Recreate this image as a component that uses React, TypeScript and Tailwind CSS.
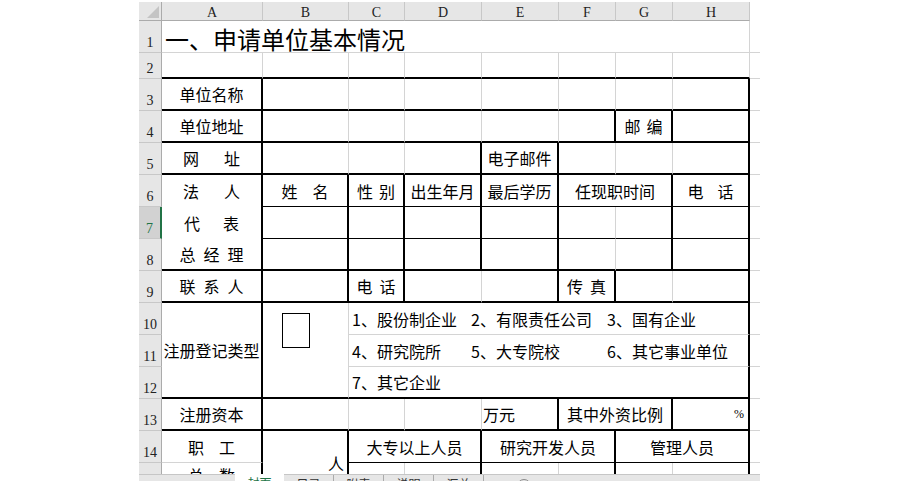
import type { ReactNode } from "react";
import clsx from "clsx";

type Edge = "g" | "T" | "t" | "n";

// gridline (g), thick black (T), thin black (t), none (n)
const RIGHT: Record<Edge, string> = {
  g: "border-r border-r-[#d4d4d4]",
  T: "border-r-2 border-r-black",
  t: "border-r border-r-black",
  n: "",
};

const BOTTOM: Record<Edge, string> = {
  g: "border-b border-b-[#d4d4d4]",
  T: "border-b-2 border-b-black",
  t: "border-b border-b-black",
  n: "",
};

const SPAN: Record<number, string> = {
  1: "col-span-1",
  2: "col-span-2",
  6: "col-span-6",
  8: "col-span-8",
};

const ROWS: Record<number, string> = {
  1: "row-span-1",
  2: "row-span-2",
  3: "row-span-3",
};

function Cell({
  span = 1,
  rows = 1,
  r = "g",
  b = "g",
  className,
  children,
}: {
  span?: number;
  rows?: number;
  r?: Edge;
  b?: Edge;
  className?: string;
  children?: ReactNode;
}) {
  return (
    <div
      className={clsx(
        "flex min-w-0 items-center justify-center overflow-hidden whitespace-nowrap",
        SPAN[span],
        ROWS[rows],
        RIGHT[r],
        BOTTOM[b],
        className,
      )}
    >
      {children}
    </div>
  );
}

// spaced-out label, chars pushed to both ends of a fixed width
function Spread({ text, className }: { text: string; className: string }) {
  return (
    <span className={clsx("flex justify-between", className)}>
      {[...text].map((ch, i) => (
        <span key={i}>{ch}</span>
      ))}
    </span>
  );
}

function RowHead({ n, active }: { n: number; active?: boolean }) {
  return (
    <div
      className={clsx(
        "flex items-end justify-center border-b border-b-[#c8c8c8] pb-[2px] font-['Liberation_Serif',serif] text-[14px] leading-[14px]",
        active
          ? "border-r-2 border-r-[#217346] bg-[#d2d2d2] text-[#217346]"
          : "border-r border-r-[#ababab] bg-[#e6e6e6] text-[#222]",
      )}
    >
      {n}
    </div>
  );
}

function ColHead({ label }: { label: string }) {
  return (
    <div className="flex items-center justify-center border-r border-b border-r-[#c8c8c8] border-b-[#ababab] bg-[#e6e6e6] pt-[3px] font-['Liberation_Serif',serif] text-[14px] leading-[14px] text-[#222]">
      {label}
    </div>
  );
}

function Blank() {
  return <Cell r="n" />;
}

const COLS = ["A", "B", "C", "D", "E", "F", "G", "H"];

function Sheet() {
  return (
    <div className="grid grid-cols-[23px_101px_86px_56px_77px_77px_57px_57px_77px_10px] grid-rows-[19px_32px_26px_repeat(13,32px)] font-['Noto_Sans_CJK_SC',sans-serif] text-[16px] leading-none text-black">
      {/* header */}
      <div className="relative border-r border-b border-r-[#ababab] border-b-[#ababab] bg-[#e6e6e6]">
        <svg className="absolute right-[2px] bottom-[2px]" width="12" height="12" viewBox="0 0 12 12">
          <polygon points="12,0 12,12 0,12" fill="#c4c4c4" />
        </svg>
      </div>
      {COLS.map((c) => (
        <ColHead key={c} label={c} />
      ))}
      <div />

      {/* 1 */}
      <RowHead n={1} />
      <Cell span={8} className="justify-start pt-[5px] pl-[3px] text-[24px]">
        一、申请单位基本情况
      </Cell>
      <Blank />

      {/* 2 */}
      <RowHead n={2} />
      {COLS.map((c) => (
        <Cell key={c} b="T" />
      ))}
      <Blank />

      {/* 3 */}
      <RowHead n={3} />
      <Cell r="T" b="T">单位名称</Cell>
      <Cell b="T" />
      <Cell b="T" />
      <Cell b="T" />
      <Cell b="T" />
      <Cell b="T" />
      <Cell b="T" />
      <Cell r="T" b="T" />
      <Blank />

      {/* 4 */}
      <RowHead n={4} />
      <Cell r="T" b="T">单位地址</Cell>
      <Cell b="T" />
      <Cell b="T" />
      <Cell b="T" />
      <Cell b="T" />
      <Cell r="T" b="T" />
      <Cell r="T" b="T">
        <Spread text="邮编" className="w-[38px]" />
      </Cell>
      <Cell r="T" b="T" />
      <Blank />

      {/* 5 */}
      <RowHead n={5} />
      <Cell r="T" b="T">
        <Spread text="网址" className="w-[57px]" />
      </Cell>
      <Cell b="T" />
      <Cell b="T" />
      <Cell r="T" b="T" />
      <Cell r="T" b="T">电子邮件</Cell>
      <Cell b="T" />
      <Cell b="T" />
      <Cell r="T" b="T" />
      <Blank />

      {/* 6 */}
      <RowHead n={6} />
      <Cell rows={3} r="T" b="T" className="flex-col items-stretch justify-start">
        <div className="flex h-[32px] shrink-0 items-center justify-center">
          <Spread text="法人" className="w-[57px]" />
        </div>
        <div className="flex h-[32px] shrink-0 items-center justify-center">
          <Spread text="代表" className="w-[55px]" />
        </div>
        <div className="flex h-[30px] shrink-0 items-center justify-center">
          <Spread text="总经理" className="w-[64px]" />
        </div>
      </Cell>
      <Cell r="T" b="t">
        <Spread text="姓名" className="w-[47px]" />
      </Cell>
      <Cell r="T" b="t">
        <Spread text="性别" className="w-[38px]" />
      </Cell>
      <Cell r="T" b="t">出生年月</Cell>
      <Cell r="T" b="t">最后学历</Cell>
      <Cell span={2} r="T" b="t">任现职时间</Cell>
      <Cell r="T" b="t">
        <Spread text="电话" className="w-[46px]" />
      </Cell>
      <Blank />

      {/* 7 */}
      <RowHead n={7} active />
      <Cell r="T" b="t" />
      <Cell r="T" b="t" />
      <Cell r="T" b="t" />
      <Cell r="T" b="t" />
      <Cell b="t" />
      <Cell r="T" b="t" />
      <Cell r="T" b="t" />
      <Blank />

      {/* 8 */}
      <RowHead n={8} />
      <Cell r="T" b="T" />
      <Cell r="T" b="T" />
      <Cell r="T" b="T" />
      <Cell r="T" b="T" />
      <Cell b="T" />
      <Cell r="T" b="T" />
      <Cell r="T" b="T" />
      <Blank />

      {/* 9 */}
      <RowHead n={9} />
      <Cell r="T" b="T">
        <Spread text="联系人" className="w-[64px]" />
      </Cell>
      <Cell r="T" b="T" />
      <Cell r="T" b="T">
        <Spread text="电话" className="w-[39px]" />
      </Cell>
      <Cell b="T" />
      <Cell r="T" b="T" />
      <Cell r="T" b="T">
        <Spread text="传真" className="w-[39px]" />
      </Cell>
      <Cell b="T" />
      <Cell r="T" b="T" />
      <Blank />

      {/* 10 - 12 */}
      <RowHead n={10} />
      <Cell rows={3} r="T" b="T">注册登记类型</Cell>
      <Cell rows={3} b="T" className="items-start justify-start">
        <div className="mt-[10px] ml-[19px] h-[35px] w-[28px] border border-black" />
      </Cell>
      <Cell span={6} r="T" className="justify-start pl-[3px]">
        <span className="w-[119px]">1、股份制企业</span>
        <span className="w-[136px]">2、有限责任公司</span>
        <span>3、国有企业</span>
      </Cell>
      <Blank />

      <RowHead n={11} />
      <Cell span={6} r="T" className="justify-start pl-[3px]">
        <span className="w-[119px]">4、研究院所</span>
        <span className="w-[136px]">5、大专院校</span>
        <span>6、其它事业单位</span>
      </Cell>
      <Blank />

      <RowHead n={12} />
      <Cell span={6} r="T" b="T" className="justify-start pl-[3px]">
        7、其它企业
      </Cell>
      <Blank />

      {/* 13 */}
      <RowHead n={13} />
      <Cell r="T" b="T">注册资本</Cell>
      <Cell b="T" />
      <Cell b="T" />
      <Cell b="T" />
      <Cell r="T" b="T" className="justify-start pl-[1px]">
        万元
      </Cell>
      <Cell span={2} r="T" b="T">其中外资比例</Cell>
      <Cell r="T" b="T" className="justify-end pr-[4px] font-['Liberation_Serif',serif] text-[12px]">
        %
      </Cell>
      <Blank />

      {/* 14 - 15 */}
      <RowHead n={14} />
      <Cell r="T">
        <Spread text="职工" className="w-[47px]" />
      </Cell>
      <Cell rows={2} r="T" className="justify-end pr-[3px]">
        人
      </Cell>
      <Cell span={2} r="T" b="t">大专以上人员</Cell>
      <Cell span={2} r="T" b="t">研究开发人员</Cell>
      <Cell span={2} r="T" b="t">管理人员</Cell>
      <Blank />

      <RowHead n={15} />
      <Cell r="T" className="pb-[8px]">
        <Spread text="总数" className="w-[47px]" />
      </Cell>
      <Cell />
      <Cell r="T" />
      <Cell />
      <Cell r="T" />
      <Cell />
      <Cell r="T" />
      <Blank />
    </div>
  );
}

function SheetTabs() {
  const tabs = ["封面", "目录", "附表", "说明", "汇总"];
  return (
    <div className="flex h-[26px] border-t border-t-[#c6c6c6] bg-[#e6e6e6] font-['Noto_Sans_CJK_SC',sans-serif] text-[12px] leading-none">
      <div className="w-[96px] shrink-0" />
      {tabs.map((name, i) =>
        i === 0 ? (
          <div key={name} className="-mt-px w-[49px] shrink-0 bg-white pt-[3px] text-center text-[#217346]">
            {name}
          </div>
        ) : (
          <div
            key={name}
            className="w-[50px] shrink-0 border-r border-r-[#ababab] pt-[3px] text-center text-[#333]"
          >
            {name}
          </div>
        ),
      )}
      <div className="ml-[33px] mt-[4px] h-[14px] w-[14px] shrink-0 rounded-full border border-[#8a8a8a]" />
    </div>
  );
}

export default function App() {
  return (
    <div className="h-[481px] w-[900px] overflow-hidden bg-white">
      <div className="ml-[139px] w-[621px] pt-[2px]">
        <div className="h-[472px] overflow-hidden">
          <Sheet />
        </div>
        <SheetTabs />
      </div>
    </div>
  );
}
